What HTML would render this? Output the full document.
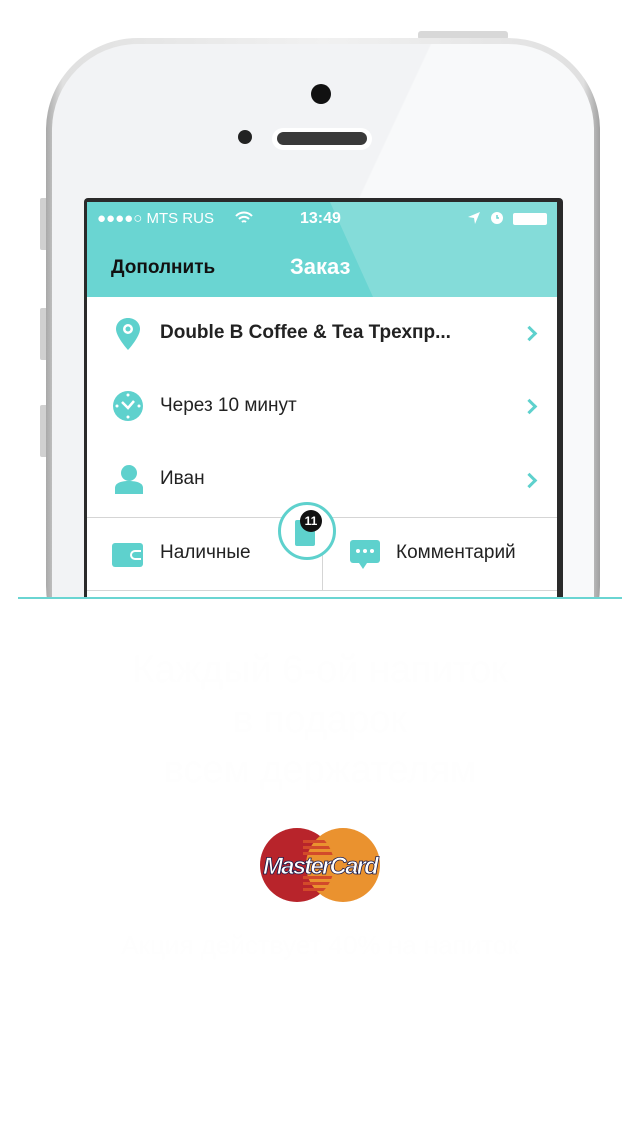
<!DOCTYPE html>
<html><head><meta charset="utf-8"><style>
*{margin:0;padding:0;box-sizing:border-box}
body{width:640px;height:1136px;background:#fff;position:relative;overflow:hidden;font-family:"Liberation Sans","DejaVu Sans",sans-serif}
.abs{position:absolute}
.phone{left:46px;top:38px;width:554px;height:640px;border-radius:92px;background:linear-gradient(90deg,#a9a9a9,#e0e0e0 3%,#f1f1f1 50%,#e0e0e0 97%,#a0a0a0);}
.phone2{left:52px;top:44px;width:542px;height:640px;border-radius:86px;background:linear-gradient(115deg,#f2f3f5 0%,#f2f3f5 45%,#f8f9fa 45.2%,#f8f9fa 100%);}
.screen{left:84px;top:198px;width:479px;height:420px;background:#2a2a2a;border-radius:4px}
.inner{left:87px;top:202px;width:470px;height:400px;background:#fff;overflow:hidden}
.row{position:absolute;left:0;width:470px;font-size:19px;color:#222}
.chev{position:absolute;right:22px;width:11px;height:11px;border-right:3px solid #5ed1cd;border-top:3px solid #5ed1cd;transform:rotate(45deg)}
.t{color:#fefefe;text-align:center;width:640px;left:0}
</style></head><body>
<div class="abs" style="left:418px;top:31px;width:90px;height:9px;background:#d8d8d8;border-radius:3px"></div>
<div class="abs" style="left:40px;top:198px;width:8px;height:52px;background:#d0d0d0;border-radius:2px"></div>
<div class="abs" style="left:40px;top:308px;width:8px;height:52px;background:#d0d0d0;border-radius:2px"></div>
<div class="abs" style="left:40px;top:405px;width:8px;height:52px;background:#d0d0d0;border-radius:2px"></div>
<div class="abs phone"></div>
<div class="abs phone2"></div>
<div class="abs" style="left:311px;top:84px;width:20px;height:20px;border-radius:50%;background:#111"></div>
<div class="abs" style="left:238px;top:130px;width:14px;height:14px;border-radius:50%;background:#222"></div>
<div class="abs" style="left:272px;top:128px;width:100px;height:22px;border-radius:11px;background:#fff"></div>
<div class="abs" style="left:277px;top:132px;width:90px;height:13px;border-radius:7px;background:#3a3a3a"></div>
<div class="abs screen"></div>
<div class="abs inner">
  <div class="abs" style="left:0;top:0;width:470px;height:95px;background:#6ad5d2"></div>
  <svg class="abs" style="left:0;top:0" width="470" height="95"><polygon points="243,0 470,0 470,95 286,95" fill="#84dcd9"/></svg>
  <div class="abs" style="left:10px;top:8px;font-size:15px;color:#fff">●●●●○ MTS RUS</div>
  <svg class="abs" style="left:148px;top:9px" width="18" height="14"><path d="M1 5a11 11 0 0116 0M4 8a7 7 0 0110 0M7 11a3 3 0 014 0" stroke="#fff" stroke-width="2" fill="none"/></svg>
  <div class="abs" style="left:213px;top:8px;font-size:16px;color:#fff;font-weight:bold">13:49</div>
  <svg class="abs" style="left:380px;top:9px" width="14" height="14"><path d="M13 1L1 6l6 1 1 6z" fill="#fff"/></svg>
  <svg class="abs" style="left:403px;top:8px" width="14" height="15"><circle cx="7" cy="8" r="6" fill="#fff"/><path d="M7 5v3h2" stroke="#6ad5d2" stroke-width="1.5" fill="none"/></svg>
  <div class="abs" style="left:426px;top:11px;width:34px;height:12px;background:#fff;border-radius:2px"></div>
  <div class="abs" style="left:24px;top:55px;font-size:19px;font-weight:bold;color:#111">Дополнить</div>
  <div class="abs" style="left:203px;top:52px;font-size:22px;font-weight:bold;color:#fff">Заказ</div>
  <div class="row" style="top:95px;height:72px">
    <svg class="abs" style="left:27px;top:20px" width="28" height="34"><path d="M14 1C7 1 2 6 2 12c0 8 12 21 12 21s12-13 12-21C26 6 21 1 14 1z" fill="#5ed1cd"/><circle cx="14" cy="12" r="5" fill="#fff"/><circle cx="14" cy="12" r="2.5" fill="#5ed1cd"/></svg>
    <div class="abs" style="left:73px;top:25px;font-weight:bold">Double B Coffee &amp; Tea Трехпр...</div>
    <div class="chev" style="top:31px"></div>
  </div>
  <div class="row" style="top:168px;height:72px">
    <svg class="abs" style="left:25px;top:20px" width="32" height="32"><circle cx="16" cy="16" r="15" fill="#5ed1cd"/><path d="M10 12l6 6 6-7" stroke="#fff" stroke-width="2.5" fill="none"/><circle cx="16" cy="5" r="1.5" fill="#fff"/><circle cx="16" cy="27" r="1.5" fill="#fff"/><circle cx="5" cy="16" r="1.5" fill="#fff"/><circle cx="27" cy="16" r="1.5" fill="#fff"/></svg>
    <div class="abs" style="left:73px;top:25px">Через 10 минут</div>
    <div class="chev" style="top:31px"></div>
  </div>
  <div class="row" style="top:240px;height:75px">
    <svg class="abs" style="left:27px;top:22px" width="30" height="30"><circle cx="15" cy="9" r="8" fill="#5ed1cd"/><path d="M1 30v-6c0-5 6-7 14-7s14 2 14 7v6z" fill="#5ed1cd"/></svg>
    <div class="abs" style="left:73px;top:26px">Иван</div>
    <div class="chev" style="top:33px"></div>
  </div>
  <div class="abs" style="left:0;top:315px;width:470px;height:1px;background:#d5d5d5"></div>
  <div class="abs" style="left:235px;top:315px;width:1px;height:73px;background:#d5d5d5"></div>
  <div class="abs" style="left:0;top:388px;width:470px;height:1px;background:#d5d5d5"></div>
  <svg class="abs" style="left:25px;top:341px" width="32" height="24"><rect x="0" y="0" width="31" height="24" rx="3" fill="#5ed1cd"/><path d="M29 8h-6a4 4 0 000 8h6" stroke="#fff" stroke-width="2" fill="none"/></svg>
  <div class="abs" style="left:73px;top:340px;font-size:19px;color:#222">Наличные</div>
  <svg class="abs" style="left:263px;top:338px" width="32" height="32"><rect x="0" y="0" width="30" height="23" rx="3" fill="#5ed1cd"/><path d="M9 23l4 6 4-6z" fill="#5ed1cd"/><circle cx="8" cy="11" r="2" fill="#fff"/><circle cx="15" cy="11" r="2" fill="#fff"/><circle cx="22" cy="11" r="2" fill="#fff"/></svg>
  <div class="abs" style="left:309px;top:340px;font-size:19px;color:#222">Комментарий</div>
  <div class="abs" style="left:191px;top:300px;width:58px;height:58px;border-radius:50%;background:#fff;border:3px solid #5ed1cd"></div>
  <div class="abs" style="left:208px;top:318px;width:20px;height:26px;background:#5ed1cd;border-radius:2px"></div>
  <div class="abs" style="left:213px;top:308px;width:22px;height:22px;border-radius:50%;background:#111;color:#fff;font-size:12px;font-weight:bold;text-align:center;line-height:22px">11</div>
</div>
<div class="abs" style="left:0;top:599px;width:640px;height:540px;background:#fff"></div>
<div class="abs" style="left:18px;top:597px;width:604px;height:2px;background:#6ad5d2"></div>
<div class="abs t" style="top:645px;font-size:38px;line-height:50px">Каждый 6-ой напиток<br>в подарок<br>всем держателям</div>
<svg class="abs" style="left:258px;top:826px" width="124" height="78">
<defs><clipPath id="c"><circle cx="39" cy="39" r="37"/></clipPath></defs>
<circle cx="39" cy="39" r="37" fill="#b8242b"/><circle cx="85" cy="39" r="37" fill="#ea922f"/>
<g clip-path="url(#c)" fill="#d24a2a"><rect x="45" y="14" width="40" height="3"/><rect x="45" y="20" width="40" height="3"/><rect x="45" y="26" width="40" height="3"/><rect x="45" y="50" width="40" height="3"/><rect x="45" y="56" width="40" height="3"/><rect x="45" y="62" width="40" height="3"/></g>
<text x="62" y="48" text-anchor="middle" font-family="Liberation Sans" font-weight="bold" font-style="italic" font-size="24" fill="#fff" stroke="#1a1a4a" stroke-width="0.8" letter-spacing="-1.8">MasterCard</text>
</svg>
<div class="abs t" style="top:930px;font-size:26px">Акция действует 40% на напиток</div>
</body></html>
